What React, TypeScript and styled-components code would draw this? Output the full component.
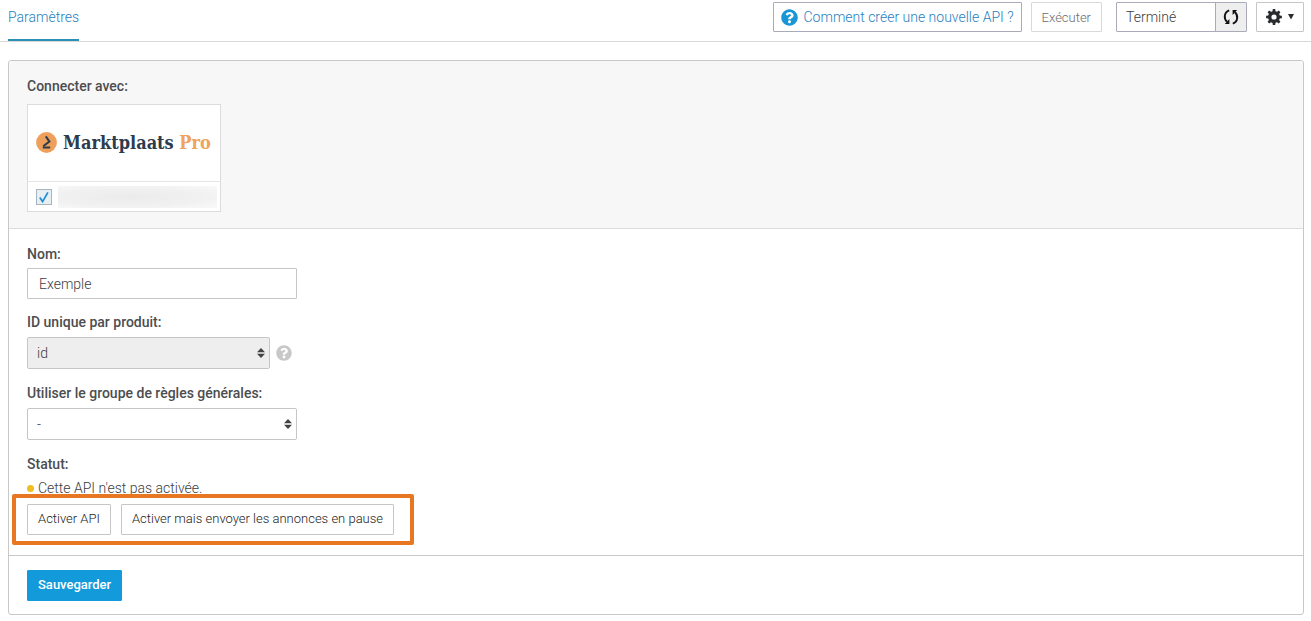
import React from "react";
import styled, { createGlobalStyle, css } from "styled-components";
import { FaQuestionCircle } from "react-icons/fa";

const GlobalStyle = createGlobalStyle`
  *, *::before, *::after { box-sizing: border-box; }
  body {
    margin: 0;
    background: #fff;
    color: #3c3d3f;
    font-family: Roboto, "Liberation Sans", sans-serif;
    font-size: 14px;
    font-weight: 300;
    line-height: 20px;
  }
  button, input, select { font-family: inherit; font-weight: inherit; margin: 0; }
`;

const Header = styled.header`
  display: flex;
  justify-content: space-between;
  align-items: flex-start;
  min-height: 42px;
  padding: 0 7px 0 8px;
  border-bottom: 1px solid #d9d9d9;
`;

const Tab = styled.a`
  height: 41px;
  padding-top: 7px;
  border-bottom: 2px solid #2c8fb5;
  color: #1f80c0;
  text-decoration: none;
`;

const Toolbar = styled.div`
  display: flex;
  gap: 9px;
  padding-top: 2px;
`;

const box = css`
  display: inline-flex;
  align-items: center;
  justify-content: center;
  border: 1px solid #c6c6c9;
  border-radius: 1px;
  background: #fff;
  white-space: nowrap;
`;

const HelpLink = styled.a`
  ${box}
  height: 30px;
  gap: 6px;
  padding: 0 7px;
  border-color: #a9abb8;
  color: #1f80c0;
  text-decoration: none;
  svg { color: #1896d6; }
`;

const ToolButton = styled.button<{ $muted?: boolean }>`
  ${box}
  height: 30px;
  gap: 6px;
  padding: 0 ${(p) => (p.$muted ? 10 : 9)}px;
  border-color: ${(p) => (p.$muted ? "#d9d9db" : "#c6c6c9")};
  color: ${(p) => (p.$muted ? "#6c6d6f" : "#2b2c2e")};
  font-size: 13px;
`;

const StateGroup = styled.div`
  display: flex;
  height: 30px;
  margin-left: 5px;
  border: 1px solid #a9abb8;
  border-radius: 1px;
`;

const StateText = styled.output`
  width: 98px;
  padding: 4px 9px;
`;

const RefreshButton = styled.button`
  display: flex;
  align-items: center;
  justify-content: center;
  width: 31px;
  padding: 0;
  border: 0;
  border-left: 1px solid #a9abb8;
  background: #eee;
  color: #111;
`;

const Card = styled.form`
  margin: 18px 7px 6px 8px;
  border: 1px solid #c8c8c8;
  border-radius: 3px;
  overflow: hidden;
`;

const ConnectSection = styled.section`
  padding: 15px 18px 16px;
  border-bottom: 1px solid #dcdcdc;
  background: #f7f7f7;
`;

const FieldsSection = styled.section`
  display: flex;
  flex-direction: column;
  gap: 13px;
  padding: 15px 18px 20px;
`;

const Footer = styled.footer`
  padding: 14px 18px 13px;
  border-top: 1px solid #c8c8c8;
`;

const labelText = css`
  display: block;
  color: #4c4d4f;
  font-weight: 500;
  line-height: 20px;
`;
const Label = styled.label`${labelText}`;
const Heading = styled.div`${labelText}`;

const Field = styled.div`
  display: flex;
  flex-direction: column;
  align-items: flex-start;
  gap: 4px;
`;

const Provider = styled.div`
  width: 194px;
  margin-top: 8px;
  border: 1px solid #dcdcdc;
  background: #fff;
`;

const Logo = styled.div`
  display: flex;
  align-items: center;
  gap: 6px;
  height: 76px;
  padding: 0 0 1px 8px;
  color: #2d3c4d;
  font: bold 18px/24px "DejaVu Serif Condensed", "DejaVu Serif", serif;
  white-space: nowrap;
`;

const ProviderName = styled.label`
  display: flex;
  align-items: center;
  gap: 6px;
  height: 30px;
  padding: 0 3px 0 8px;
  border-top: 1px solid #e6e6e6;
`;

const Tick = styled.input`
  appearance: none;
  width: 16px;
  height: 16px;
  margin: 0;
  border: 1px solid #a9b4bc;
  background: #e8eff3;
  &:checked {
    background: #e8eff3 url("data:image/svg+xml,%3Csvg xmlns='http://www.w3.org/2000/svg' viewBox='0 0 14 14'%3E%3Cpath d='M2.8 7.6 5.6 11.6 10.9 2.4' fill='none' stroke='%23258fd6' stroke-width='1.8'/%3E%3C/svg%3E") center / 14px 14px no-repeat;
  }
`;

const Redacted = styled.span`
  flex: 1;
  height: 22px;
  background: radial-gradient(ellipse at 45% 50%, #ebebeb, #f1f1f1 60%, #f9f9f9);
`;

const TextInput = styled.input`
  width: 270px;
  height: 31px;
  padding: 0 11px;
  border: 1px solid #c6c6c6;
  border-radius: 1px;
  background: #fff;
  color: #3c3d3f;
  font-size: 14px;
`;

const SelectRow = styled.div`
  display: flex;
  align-items: center;
  gap: 6px;
  padding: 1px 0;
`;

const Select = styled.select<{ $width: number }>`
  appearance: none;
  width: ${(p) => p.$width}px;
  height: 32px;
  padding: 0 24px 0 9px;
  border: 1px solid #c6c6c6;
  border-radius: 2px;
  background: #fff url("data:image/svg+xml,%3Csvg xmlns='http://www.w3.org/2000/svg' viewBox='0 0 8 10'%3E%3Cpath d='M0 4.2 4 0 8 4.2ZM0 5.8H8L4 10Z' fill='%23444'/%3E%3C/svg%3E") right 4px center / 8px 10px no-repeat;
  color: #3c3d3f;
  font-size: 14px;
  &:disabled { background-color: #eee; opacity: 1; }
`;

const HelpButton = styled.button`
  display: flex;
  padding: 0;
  border: 0;
  background: none;
  color: #c8c8c8;
`;

const Status = styled.p`
  display: flex;
  align-items: center;
  gap: 4px;
  margin: 0 0 2px;
  &::before {
    content: "";
    width: 7px;
    height: 7px;
    border-radius: 50%;
    background: #efbf22;
  }
`;

const Actions = styled.div`
  position: relative;
  display: flex;
  gap: 10px;
  &::after {
    content: "";
    position: absolute;
    inset: -10px -20px -10px -15px;
    border: 4px solid #e87722;
    border-radius: 2px;
    pointer-events: none;
  }
`;

const Button = styled.button<{ $primary?: boolean }>`
  ${box}
  height: 31px;
  padding: 0 10px 2px;
  color: #222;
  font-size: 13px;
  ${(p) =>
    p.$primary &&
    css`
      border-color: #129adb;
      background: #129adb;
      color: #fff;
      font-weight: 500;
    `}
`;

const Accent = styled.span`color: #eea45d;`;

const LogoMark = () => (
  <svg width="21" height="21" viewBox="0 0 21 21" aria-hidden="true">
    <circle cx="10.5" cy="10.5" r="10.4" fill="#eea05b" />
    <path d="M9.8 4.4 13.4 9.6 7.2 14.2" fill="none" stroke="#2d3c4d" strokeWidth="2" />
    <path d="M6.8 15.4H14.2" stroke="#2d3c4d" strokeWidth="2" />
  </svg>
);

const RefreshIcon = () => (
  <svg width="16" height="18" viewBox="0 0 16 18" fill="none" stroke="currentColor" strokeWidth="1.9" aria-hidden="true">
    <path d="M6.2 2.4C.9 4.4.6 10.6 4 13.8" />
    <path d="M9.8 15.6C15.1 13.6 15.4 7.4 12 4.2" />
    <path d="M1.8 15.9H6.4V11ZM14.2 2.1H9.6V7Z" fill="currentColor" stroke="none" />
  </svg>
);

const GearIcon = () => (
  <svg width="16" height="16" viewBox="0 0 16 16" aria-hidden="true">
    <circle cx="8" cy="8" r="4.3" fill="none" stroke="currentColor" strokeWidth="3.4" />
    {[0, 45, 90, 135].map((angle) => (
      <path
        key={angle}
        d="M6.4 3 6.8.1H9.2L9.6 3ZM6.4 13 6.8 15.9H9.2L9.6 13Z"
        fill="currentColor"
        transform={`rotate(${angle} 8 8)`}
      />
    ))}
  </svg>
);

const CaretIcon = () => (
  <svg width="6" height="6" viewBox="0 0 6 6" aria-hidden="true">
    <path d="M0 0H6L3 5.6Z" fill="currentColor" />
  </svg>
);

export default function App() {
  return (
    <>
      <GlobalStyle />
      <Header>
        <Tab href="#parametres">Paramètres</Tab>
        <Toolbar>
          <HelpLink href="#aide">
            <FaQuestionCircle size={17} />
            Comment créer une nouvelle API ?
          </HelpLink>
          <ToolButton type="button" $muted>Exécuter</ToolButton>
          <StateGroup>
            <StateText>Terminé</StateText>
            <RefreshButton type="button" aria-label="Actualiser"><RefreshIcon /></RefreshButton>
          </StateGroup>
          <ToolButton type="button" aria-label="Options">
            <GearIcon />
            <CaretIcon />
          </ToolButton>
        </Toolbar>
      </Header>
      <Card>
        <ConnectSection>
          <Heading>Connecter avec:</Heading>
          <Provider>
            <Logo>
              <LogoMark />
              <span>Marktplaats <Accent>Pro</Accent></span>
            </Logo>
            <ProviderName>
              <Tick type="checkbox" defaultChecked aria-label="Marktplaats Pro" />
              <Redacted />
            </ProviderName>
          </Provider>
        </ConnectSection>
        <FieldsSection>
          <Field>
            <Label htmlFor="nom">Nom:</Label>
            <TextInput id="nom" defaultValue="Exemple" />
          </Field>
          <Field>
            <Label htmlFor="uid">ID unique par produit:</Label>
            <SelectRow>
              <Select id="uid" $width={243} disabled><option>id</option></Select>
              <HelpButton type="button" aria-label="Aide"><FaQuestionCircle size={16} /></HelpButton>
            </SelectRow>
          </Field>
          <Field>
            <Label htmlFor="regles">Utiliser le groupe de règles générales:</Label>
            <SelectRow>
              <Select id="regles" $width={270}><option>-</option></Select>
            </SelectRow>
          </Field>
          <Field>
            <Heading>Statut:</Heading>
            <Status>Cette API n'est pas activée.</Status>
            <Actions>
              <Button type="button">Activer API</Button>
              <Button type="button">Activer mais envoyer les annonces en pause</Button>
            </Actions>
          </Field>
        </FieldsSection>
        <Footer>
          <Button type="button" $primary>Sauvegarder</Button>
        </Footer>
      </Card>
    </>
  );
}
